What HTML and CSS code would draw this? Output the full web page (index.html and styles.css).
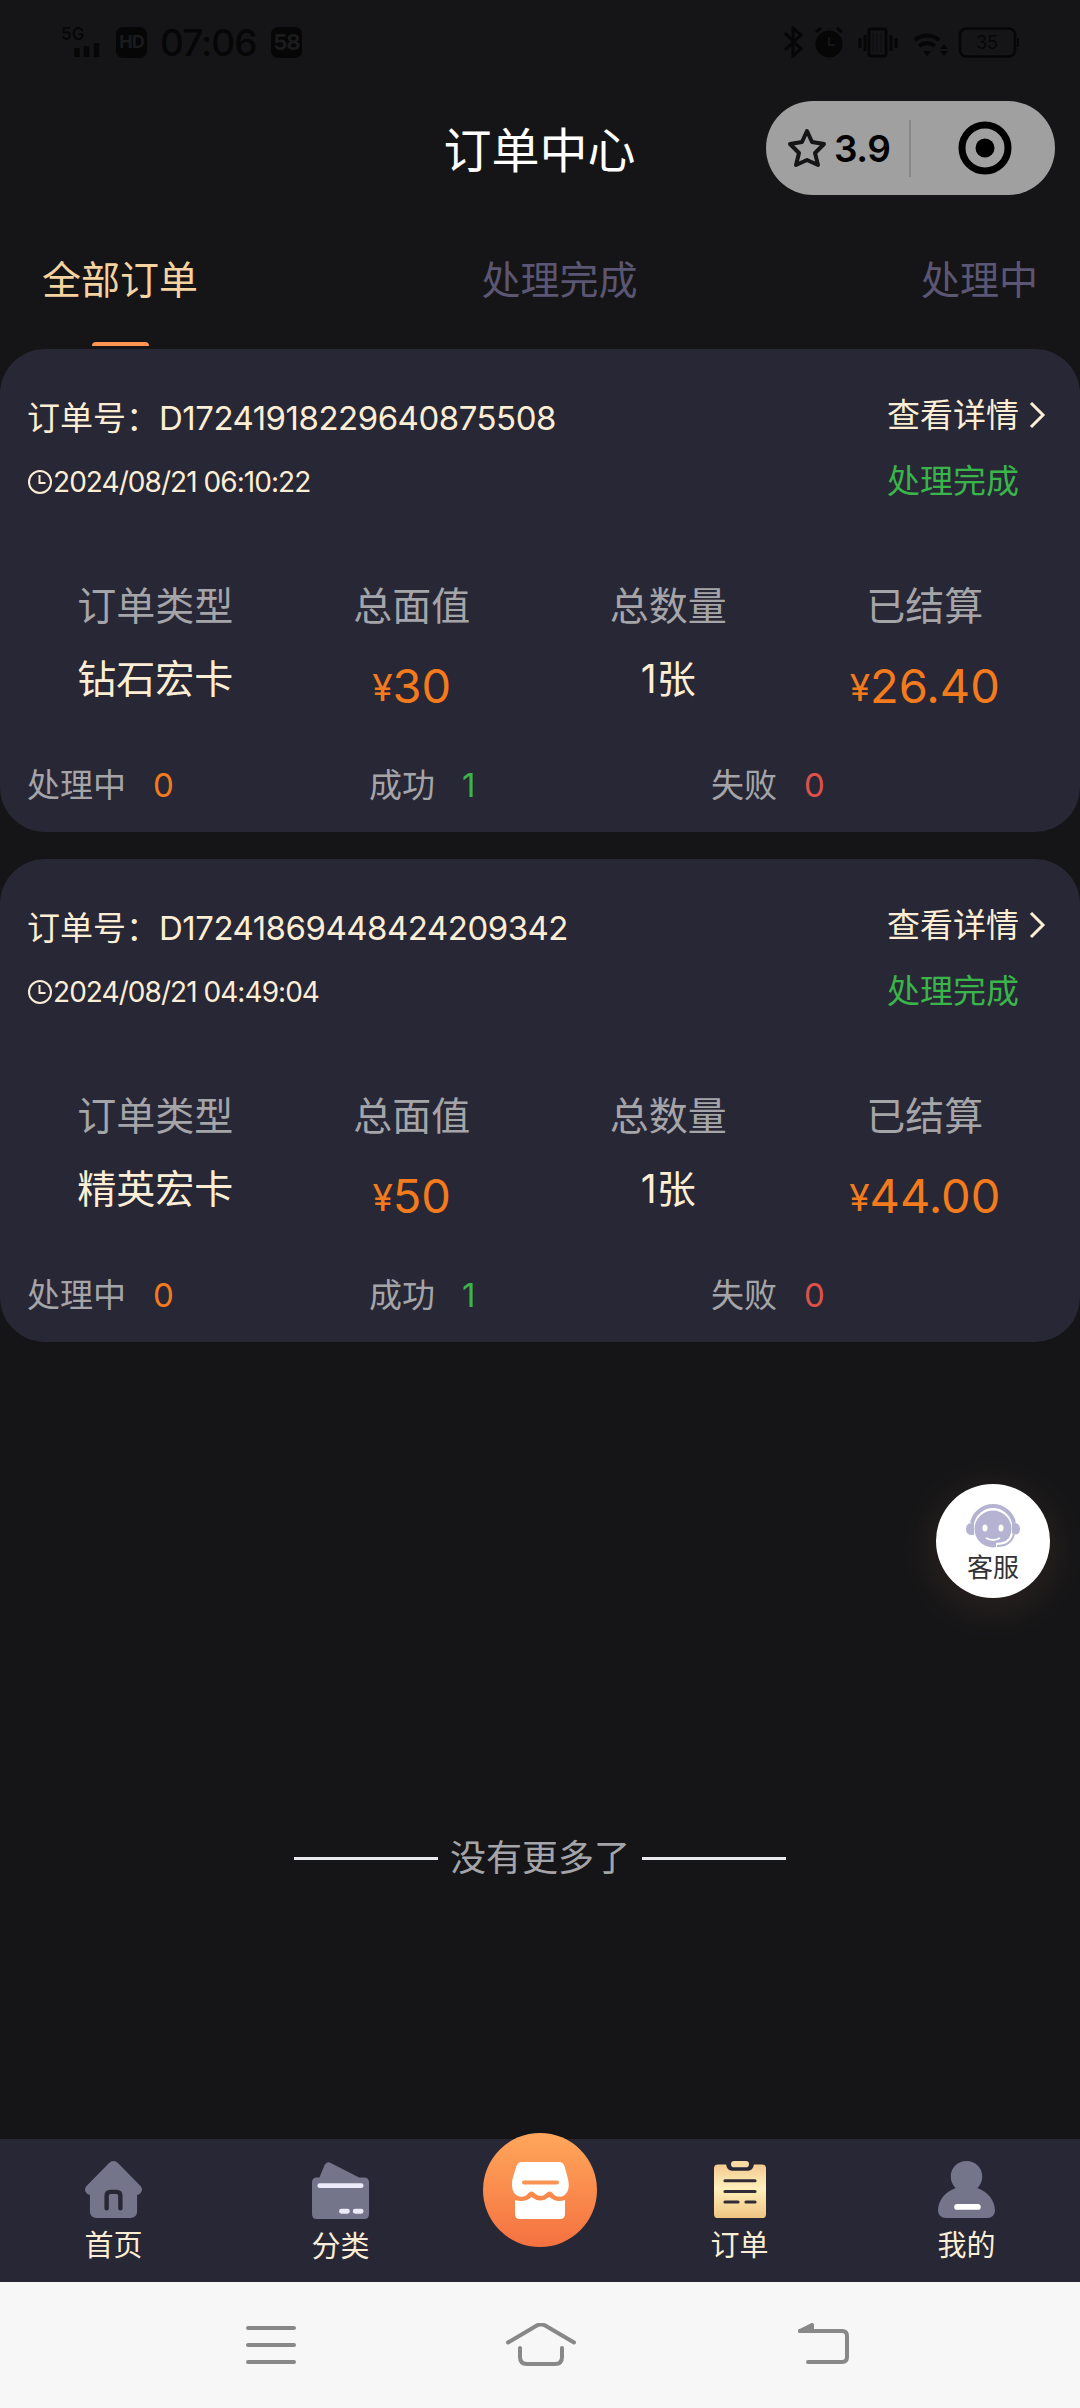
FILE: index.html
```html
<!DOCTYPE html>
<html lang="zh-CN">
<head>
<meta charset="utf-8">
<title>订单中心</title>
<link rel="stylesheet" href="styles.css">
</head>
<body>
<header class="status">
  <div class="status-left">
    <div class="signal"><span class="gen">5G</span>
      <svg class="bars" width="26" height="14" viewBox="0 0 26 14"><path d="M3 5v9M12.500 3v11M22.500 0v14" stroke="currentColor" stroke-width="5.500"/></svg>
    </div>
    <span class="chip">HD</span>
    <span class="clock">07:06</span>
    <span class="chip chip-num">58</span>
  </div>
  <svg class="status-right" width="236" height="32" viewBox="784 27 236 32" fill="none" stroke="currentColor" stroke-width="3">
    <path d="M786 34l16 16-8 7V29l8 7-16 15"/>
    <circle cx="830" cy="45" r="13.500" fill="currentColor" stroke="none"/><path d="M817 33l5-4M843 33l-5-4"/><path d="M830 38v8h6" stroke="#151517" stroke-width="2"/>
    <rect x="870" y="30" width="17" height="27" rx="2"/><path d="M861 39v10M866 36v16M892 36v16M897 39v10"/><path d="M874 34v19M878 34v19M882 34v19" stroke-width="1" opacity=".5"/>
    <path d="M916 41q12-9 24 0M920 47q8-6 16 0" stroke-width="4"/><path d="M924 52h8l-4 5zM941 50l4-5 4 5zM941 52h8l-4 5z" fill="currentColor" stroke="none"/>
    <rect x="961" y="29.500" width="55" height="28" rx="6" stroke-width="2.500"/><path d="M1019 39v9" stroke-width="2"/>
    <text x="988" y="50" class="battery-text">35</text>
  </svg>
</header>

<div class="titlebar">
  <h1>订单中心</h1>
  <div class="capsule">
    <svg class="star" width="40" height="40" viewBox="0 0 40 40"><path d="M20 3l5 11 12 2-9 9 3 12-11-5-11 5 3-12-9-9 12-2z" fill="none" stroke="#151517" stroke-width="4" stroke-linejoin="round"/></svg>
    <span class="score">3.9</span>
    <i class="divider"></i>
    <svg class="target" width="54" height="54" viewBox="0 0 54 54"><circle cx="27" cy="27" r="23" fill="none" stroke="#000" stroke-width="7"/><circle cx="27" cy="27" r="9.500"/></svg>
  </div>
</div>

<nav class="tabs">
  <a class="tab active">全部订单</a>
  <a class="tab">处理完成</a>
  <a class="tab">处理中</a>
</nav>

<main class="orders">
  <article class="order">
    <div class="top">
      <div class="ident">
        <div class="number">订单号：<span class="code">D17241918229640875508</span></div>
        <div class="time"><svg width="26" height="26" viewBox="0 0 26 26"><path d="M12.500 6v8h6M24 13a11 11 0 1 1-22 0 11 11 0 0 1 22 0z" fill="none" stroke="currentColor" stroke-width="2"/></svg><span>2024/08/21 06:10:22</span></div>
      </div>
      <div class="state">
        <div class="detail">查看详情<svg width="18" height="28" viewBox="0 0 18 28"><path d="M3 2l12 12L3 26" fill="none" stroke="currentColor" stroke-width="3"/></svg></div>
        <div class="done">处理完成</div>
      </div>
    </div>
    <div class="facts">
      <div><span class="label">订单类型</span><span class="value">钻石宏卡</span></div>
      <div><span class="label">总面值</span><span class="price"><small>¥</small>30</span></div>
      <div><span class="label">总数量</span><span class="value">1张</span></div>
      <div><span class="label">已结算</span><span class="price"><small>¥</small>26.40</span></div>
    </div>
    <div class="counts">
      <div>处理中<b class="orange">0</b></div><div>成功<b class="green">1</b></div><div>失败<b class="red">0</b></div>
    </div>
  </article>
  <article class="order">
    <div class="top">
      <div class="ident">
        <div class="number">订单号：<span class="code">D17241869448424209342</span></div>
        <div class="time"><svg width="26" height="26" viewBox="0 0 26 26"><path d="M12.500 6v8h6M24 13a11 11 0 1 1-22 0 11 11 0 0 1 22 0z" fill="none" stroke="currentColor" stroke-width="2"/></svg><span>2024/08/21 04:49:04</span></div>
      </div>
      <div class="state">
        <div class="detail">查看详情<svg width="18" height="28" viewBox="0 0 18 28"><path d="M3 2l12 12L3 26" fill="none" stroke="currentColor" stroke-width="3"/></svg></div>
        <div class="done">处理完成</div>
      </div>
    </div>
    <div class="facts">
      <div><span class="label">订单类型</span><span class="value">精英宏卡</span></div>
      <div><span class="label">总面值</span><span class="price"><small>¥</small>50</span></div>
      <div><span class="label">总数量</span><span class="value">1张</span></div>
      <div><span class="label">已结算</span><span class="price"><small>¥</small>44.00</span></div>
    </div>
    <div class="counts">
      <div>处理中<b class="orange">0</b></div><div>成功<b class="green">1</b></div><div>失败<b class="red">0</b></div>
    </div>
  </article>
  <div class="end">没有更多了</div>
</main>

<button class="service">
  <svg width="54" height="46" viewBox="0 0 54 46"><g fill="#b5b3d2"><circle cx="27" cy="26" r="18.500"/><path d="M0 26q0-6 6-6h2v12H6q-6 0-6-6zM54 26q0-6-6-6h-2v12h2q6 0 6-6z"/></g><path d="M6 20a21.500 21.500 0 0 1 42 0" fill="none" stroke="#b5b3d2" stroke-width="4"/><path d="M48 31q-3 12-18 12" fill="none" stroke="#fff" stroke-width="6"/><path d="M48 31q-3 12-17 12" fill="none" stroke="#b5b3d2" stroke-width="2"/><ellipse cx="19" cy="25" rx="2.500" ry="3.500" fill="#fff"/><ellipse cx="35" cy="25" rx="2.500" ry="3.500" fill="#fff"/><path d="M20 35q7 4 14 0" fill="none" stroke="#fff" stroke-width="2"/></svg>
  <span>客服</span>
</button>

<nav class="menu">
  <a><svg width="57" height="57" viewBox="0 0 58 59" preserveAspectRatio="none"><path d="M24 2.500q5-5 10 0L56.500 26q3 4 0 7-1.500 2-3.500 2v17q0 7-7 7H12q-7 0-7-7V35q-2 0-3.500-2-3-3 0-7z" fill="#74758b"/><path d="M22 49V36q0-4 4-4h6q4 0 4 4v13" fill="none" stroke="#282735" stroke-width="4.500" stroke-linecap="round"/></svg>首页</a>
  <a><svg width="57" height="58" viewBox="0 0 58 60" preserveAspectRatio="none"><path d="M0 22q0-5 5-5h2.500L13 4q2-4 6-2l29 15h5q5 0 5 5v33q0 5-5 5H5q-5 0-5-5z" fill="#74758b"/><path d="M8 25.500h42M30 52h6M44 52h6" stroke="#ebebfb" stroke-width="5" stroke-linecap="round"/></svg>分类</a>
  <a class="store" aria-label="商店"><svg width="57" height="57" viewBox="0 0 57 57"><path d="M10 0h37q4 0 5.500 4L56 17q3 14-6 17.500-6 1-9-3-3.500-4-7 0-5.500 5-11 0-3.500-4-7 0-3 4-9 3Q-2 31 .5 17L4.500 4Q6 0 10 0zM3 38q10 3 16.500-3Q28 42 37.500 35 44 41 53 38v14q0 5-5 5H8q-5 0-5-5z" fill="#fff"/><path d="M12 20.500h33" stroke="#fa9455" stroke-width="4" stroke-linecap="round"/></svg></a>
  <a><svg width="52" height="57" viewBox="0 0 52 59" preserveAspectRatio="none"><defs><linearGradient id="gold" x1="0" y1="0" x2="0" y2="1"><stop offset="0" stop-color="#f3ca90"/><stop offset=".45" stop-color="#fff0bb"/><stop offset="1" stop-color="#f0c481"/></linearGradient></defs><rect y="3.500" width="52" height="55.500" rx="4" fill="url(#gold)"/><path d="M12 3h28q-1 7-6 7H18q-5 0-6-7z" fill="#282735"/><rect x="17" y="0" width="18" height="6.500" rx="3.200" fill="#f8dca3"/><path d="M11 20.500h30M11 31.500h30M11 42.500h13M32 42.500h9" stroke="#302b34" stroke-width="3.200" stroke-linecap="round"/></svg>订单</a>
  <a><svg width="57" height="57" viewBox="0 0 58 59" preserveAspectRatio="none"><path d="M29 0c9 0 16 7 16 16q0 7-5 12c11 4 18 13 18 24q-1 7-8 7H8q-7 0-8-7c0-11 7-20 18-24q-5-5-5-12C13 7 20 0 29 0z" fill="#74758b"/><path d="M19.500 47.500h21" stroke="#fff" stroke-width="6" stroke-linecap="round"/></svg>我的</a>
</nav>

<footer class="system">
  <svg width="50" height="44" viewBox="0 0 50 44"><path d="M2 5h46M2 22h46M2 39h46"/></svg>
  <svg width="70" height="46" viewBox="0 0 70 46"><path d="M2 19.500L30 3q5-3 10 0l28 16.500M14 25v9q0 7 7 7h28q7 0 7-7v-9"/></svg>
  <svg width="52" height="44" viewBox="0 0 52 44"><path d="M2 8h42q5 0 5 5v21q0 5-5 5H10"/><path class="tip" d="M2 8l12-6v6z"/></svg>
</footer>
</body>
</html>
```

FILE: styles.css
```css
* { box-sizing: border-box; }
body {
  margin: 0; width: 1080px; height: 2408px; position: relative;
  display: flex; flex-direction: column; overflow: hidden;
  background: #151517; color: #fceed5;
  font-family: Inter, "Noto Sans CJK SC", sans-serif; font-size: 33px; line-height: 1;
}
svg { display: block; flex: none; }

.status { height: 84px; padding: 25px 61px 0 61px; display: flex; justify-content: space-between; align-items: flex-start; color: #060607; }
.status-left { display: flex; align-items: center; height: 34px; }
.signal { width: 55px; height: 34px; }
.gen { display: block; font-size: 17px; font-weight: 600; line-height: 18px; }
.bars { margin-left: 13px; }
.chip { width: 31px; height: 31px; border-radius: 7px; background: #060607; color: #1b1b1d; display: flex; align-items: center; justify-content: center; font-size: 18px; font-weight: 700; letter-spacing: -1px; }
.chip-num { font-size: 22px; }
.clock { width: 98px; margin: 0 13px; font-size: 37px; font-weight: 500; letter-spacing: -1px; white-space: nowrap; }
.status-right { margin-top: 1px; }
.battery-text { font-size: 18px; text-anchor: middle; fill: currentColor; stroke: none; }

.titlebar { height: 132px; padding: 17px 25px 0 0; display: grid; grid-template-columns: 1fr auto 1fr; align-items: start; }
.titlebar h1 { grid-column: 2; margin: 0; padding-top: 26px; font-size: 48px; font-weight: 400; line-height: 48px; color: #fff; transform: translateX(12px); }
.capsule { grid-column: 3; justify-self: end; width: 289px; height: 94px; border-radius: 47px; background: #a0a0a1; color: #000; display: flex; align-items: center; padding-left: 21px; }
.score { width: 58px; margin-left: 7px; font-size: 37px; font-weight: 600; letter-spacing: -.5px; white-space: nowrap; }
.divider { width: 2px; height: 57px; margin-left: 17px; background: #89898a; }
.target { margin-left: 47px; }

.tabs { height: 133px; padding: 44px 42px 0; display: flex; justify-content: space-between; }
.tab { font-size: 39px; line-height: 40px; color: #5b5673; display: flex; flex-direction: column; align-items: center; }
.active { color: #f5d3a0; }
.active::after { content: ""; width: 57px; height: 4px; margin-top: 42px; border-radius: 4px 4px 0 0; background: #ff9453; }

.orders { height: 1790px; }
.order { height: 483px; margin-bottom: 27px; border-radius: 45px; background: #282735; }
.top { height: 210px; padding: 0 34px 0 27px; display: flex; justify-content: space-between; }
.number { padding-top: 51px; line-height: 36px; white-space: nowrap; }
.code { letter-spacing: -.5px; }
.time { margin-top: 33px; display: flex; align-items: center; height: 26px; }
.time span { font-size: 28px; letter-spacing: -.95px; white-space: nowrap; }
.state { padding-top: 48px; }
.detail { display: flex; align-items: center; gap: 9px; line-height: 36px; }
.done { margin-top: 30px; line-height: 36px; color: #39b54a; }
.facts { padding: 25px 27px 0; display: grid; grid-template-columns: repeat(4, 1fr); height: 195px; }
.facts > div { display: flex; flex-direction: column; align-items: center; }
.label { font-size: 39px; line-height: 44px; color: #a5a5a9; }
.value { font-size: 39px; line-height: 44px; margin-top: 29px; }
.price { font-size: 47px; line-height: 50px; margin-top: 33px; color: #f37b1d; white-space: nowrap; }
.price small { font-size: 37px; vertical-align: 2px; line-height: 1; }
.counts { padding: 11px 27px 0; display: grid; grid-template-columns: repeat(3, 342px); line-height: 40px; color: #a5a5a9; }
.counts b { font-weight: 400; margin-left: 27px; }
.orange { color: #f37b1d; } .green { color: #39b54a; } .red { color: #dd514c; }
.end { margin-top: 494px; display: flex; justify-content: center; align-items: center; gap: 12px; font-size: 36px; line-height: 44px; color: #a5a5a9; }
.end::before, .end::after { content: ""; width: 144px; height: 3px; background: #e8eaed; }

.service { position: absolute; left: 936px; top: 1484px; width: 114px; height: 114px; padding: 19px 0 0; border: 0; border-radius: 50%; background: #fff; color: #333; display: flex; flex-direction: column; align-items: center; gap: 3px; font-family: inherit; font-size: 26px; line-height: 32px; box-shadow: 0 8px 48px rgba(255, 175, 120, .12); }

.menu { height: 143px; background: #282735; display: grid; grid-template-columns: 227px 227px 172px 227px 227px; font-size: 29px; line-height: 36px; }
.menu a { display: flex; flex-direction: column; align-items: center; gap: 10px; padding-top: 22px; }
.menu a svg { margin-bottom: 0; }
.menu .store { justify-self: center; width: 114px; height: 114px; margin-top: -6px; padding-top: 29px; border-radius: 50%; background: linear-gradient(#ffa75b, #f57140); }
.system { height: 126px; padding: 41px 0 0 246px; background: #f7f7f7; display: flex; }
.system svg:nth-child(2) { margin: 0 222px 0 210px; }
.system path { fill: none; stroke: #888; stroke-width: 4; stroke-linecap: round; stroke-linejoin: round; }
.system .tip { fill: #888; }
```
